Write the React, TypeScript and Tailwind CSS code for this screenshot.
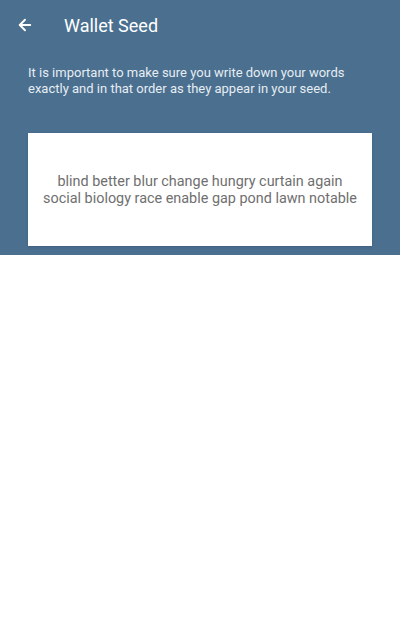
import { ArrowLeft } from "lucide-react";

const seedLines = [
  "blind better blur change hungry curtain again",
  "social biology race enable gap pond lawn notable",
];

export default function App() {
  return (
    <div className="min-h-[618px] bg-white font-['Roboto',sans-serif]">
      {/* Header panel */}
      <div className="bg-[#4a6f8f] pb-[9px]">
        <div className="flex items-center h-[50px] px-[16px]">
          <ArrowLeft size={18} strokeWidth={2.5} className="text-white" />
          <h1 className="ml-[30px] text-[18px] text-white">Wallet Seed</h1>
        </div>
        <p className="px-[28px] mt-[15px] text-[13px] leading-[16px] text-[#e6edf3]">
          It is important to make sure you write down your words exactly and in that order as they
          appear in your seed.
        </p>
        <div className="mx-[28px] mt-[36px] h-[113px] bg-white flex flex-col items-center justify-center shadow-sm">
          {seedLines.map((line) => (
            <p key={line} className="text-center text-[14.4px] leading-[17px] text-[#6f6f6f] whitespace-nowrap">
              {line}
            </p>
          ))}
        </div>
      </div>
    </div>
  );
}
